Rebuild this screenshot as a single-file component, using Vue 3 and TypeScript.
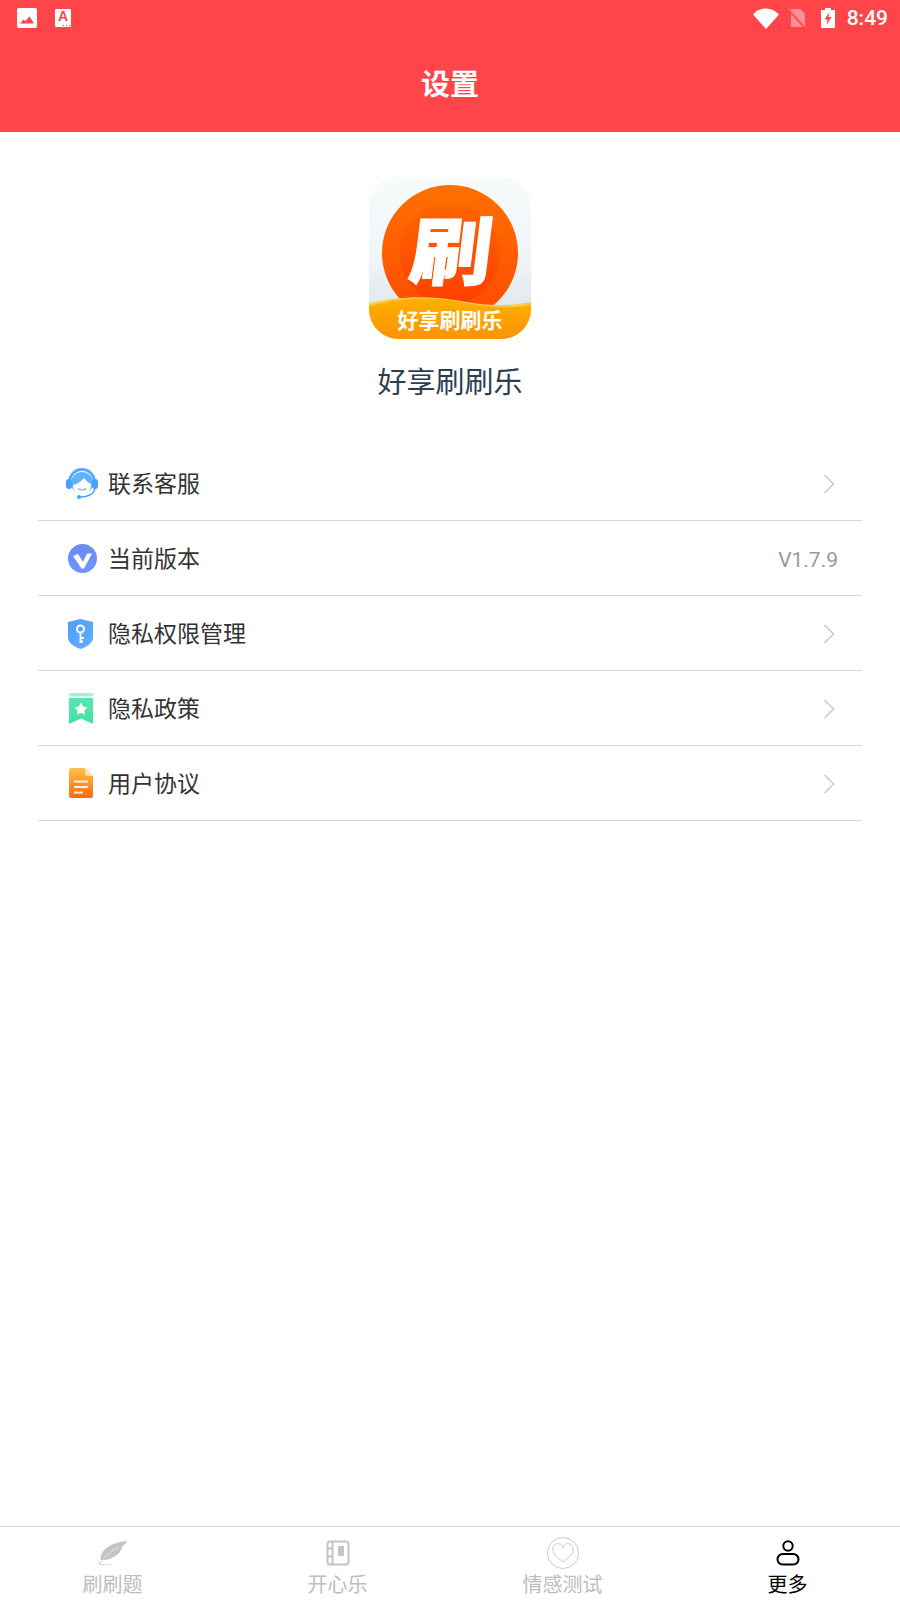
<script setup lang="ts">
// 设置页：头部、应用信息、菜单列表、底部标签栏
interface MenuRow {
  key: string;
  label: string;
  value?: string;
}

const rows: MenuRow[] = [
  { key: "service", label: "联系客服" },
  { key: "version", label: "当前版本", value: "V1.7.9" },
  { key: "permission", label: "隐私权限管理" },
  { key: "policy", label: "隐私政策" },
  { key: "agreement", label: "用户协议" },
];

const tabs = [
  { key: "quiz", label: "刷刷题" },
  { key: "fun", label: "开心乐" },
  { key: "test", label: "情感测试" },
  { key: "more", label: "更多", active: true },
];
</script>

<template>
  <div class="page">
    <header class="head">
      <div class="status">
        <svg class="st-img" width="20" height="20" viewBox="0 0 20 20">
          <rect width="20" height="20" rx="2" fill="#fff" />
          <path d="M3 15.500 6.500 11.500 8.500 13 12.500 8.500 17 15.500Z" fill="#ff454a" />
        </svg>
        <div class="st-app"><span>A</span></div>
        <div class="st-right">
          <svg class="st-wifi" width="26" height="21" viewBox="0 0 26 21"><path d="M0 6.500C3.500 2.500 8 0.500 13 0.500S22.500 2.500 26 6.500L13 21Z" fill="#fff" /></svg>
          <svg class="st-sim" width="18" height="20" viewBox="0 0 18 20">
            <path d="M3 1H12L17 6V19H3Z" fill="#fff" opacity=".4" />
            <path d="M0 1 17.500 20" stroke="#ff454a" stroke-width="2.500" />
            <path d="M0 0 18 19.500" stroke="#fff" stroke-width="1" opacity=".35" />
          </svg>
          <svg class="st-batt" width="14" height="20" viewBox="0 0 14 20">
            <path d="M0 2H4V0H10V2H14V20H0Z" fill="#fff" />
            <path d="M8.500 4 3.500 11.500H6.500L5.500 17 10.500 9H7.500Z" fill="#ff454a" />
          </svg>
          <span class="st-time">8:49</span>
        </div>
      </div>
      <h1 class="title">设置</h1>
    </header>

    <main class="main">
      <section class="about">
        <svg class="logo" width="162" height="162" viewBox="0 0 162 162">
          <defs>
            <linearGradient id="bg" x1="0" y1="0" x2="0" y2="1">
              <stop offset="0" stop-color="#f8fbfb" />
              <stop offset=".5" stop-color="#f0f5f8" />
              <stop offset="1" stop-color="#d4e0e9" />
            </linearGradient>
            <linearGradient id="sun" x1="0" y1="0" x2="0" y2="1">
              <stop offset="0" stop-color="#ff7000" />
              <stop offset="1" stop-color="#ff4a00" />
            </linearGradient>
            <linearGradient id="sunin" x1="0" y1="0" x2="0" y2="1">
              <stop offset="0" stop-color="#ff6400" />
              <stop offset="1" stop-color="#ff4000" />
            </linearGradient>
            <linearGradient id="wave" x1="0" y1="0" x2="0" y2="1">
              <stop offset="0" stop-color="#ffb000" />
              <stop offset="1" stop-color="#ff9200" />
            </linearGradient>
            <clipPath id="round"><rect width="162" height="162" rx="30" /></clipPath>
          </defs>
          <g clip-path="url(#round)">
            <rect width="162" height="162" fill="url(#bg)" />
            <circle cx="81" cy="76" r="68" fill="url(#sun)" />
            <circle cx="81" cy="77" r="50" fill="url(#sunin)" />
            <text class="logo-big" text-anchor="middle" transform="translate(79 102) skewX(-7) scale(1.08 .98)">刷</text>
            <path d="M0 126C25 121 45 119 70 121S120 133 162 125V162H0Z" fill="#ffc94a" />
            <path d="M0 129C25 123 45 120 70 122S125 135 162 128V162H0Z" fill="url(#wave)" />
            <text class="logo-small" x="81" y="151" text-anchor="middle">好享刷刷乐</text>
          </g>
        </svg>
        <div class="app-name">好享刷刷乐</div>
      </section>

      <ul class="menu">
        <li v-for="row in rows" :key="row.key" class="row">
          <svg class="row-icon" width="34" height="34" viewBox="0 0 34 34">
            <g v-if="row.key === 'service'" transform="translate(1 1)">
              <path d="M4.500 16C4.500 8 10 2.500 17 2.500S29.500 8 29.500 16" fill="none" stroke="#56abff" stroke-width="3" />
              <circle cx="17" cy="16" r="11" fill="#5fb2ff" />
              <path d="M8 18C12 17 17 14 19 11C21 14 24 16 26 17C26 24 22 28 17 28S8 24 8 18Z" fill="#fff" />
              <rect x="1" y="12" width="6" height="10" rx="3" fill="#45a3ff" />
              <rect x="27" y="12" width="6" height="10" rx="3" fill="#45a3ff" />
              <path d="M13 21.500C15 23.500 19 23.500 21 21.500" fill="none" stroke="#5fb2ff" stroke-width="1.200" />
              <path d="M30 21C29 27 23 30 15 30" fill="none" stroke="#45a3ff" stroke-width="1.500" />
              <circle cx="14" cy="30" r="2" fill="#45a3ff" />
            </g>
            <template v-else-if="row.key === 'version'">
              <defs>
                <linearGradient id="ver" x1="0" y1="0" x2="0" y2="1">
                  <stop offset="0" stop-color="#6b8cf0" />
                  <stop offset="1" stop-color="#6a95ff" />
                </linearGradient>
              </defs>
              <circle cx="18.500" cy="17.500" r="14.500" fill="url(#ver)" />
              <path d="M9 15 14 13 19 21 23 12.500H28L20 27.500H17.500Z" fill="#fff" />
            </template>
            <template v-else-if="row.key === 'permission'">
              <defs>
                <linearGradient id="shield" x1="0" y1="0" x2="1" y2="1">
                  <stop offset="0" stop-color="#4e9dfb" />
                  <stop offset="1" stop-color="#5fb1ff" />
                </linearGradient>
              </defs>
              <path d="M16.500 3 29 6V22C29 27 22 31 16.500 33C11 31 4 27 4 22V6Z" fill="url(#shield)" />
              <circle cx="16.500" cy="13" r="3.500" fill="none" stroke="#fff" stroke-width="2" />
              <path d="M16.500 16.500V27M16.500 22H20M16.500 25.500H19" fill="none" stroke="#fff" stroke-width="1.800" />
            </template>
            <template v-else-if="row.key === 'policy'">
              <defs>
                <linearGradient id="book" x1="0" y1="0" x2="0" y2="1">
                  <stop offset="0" stop-color="#5be5b1" />
                  <stop offset="1" stop-color="#3fe3a3" />
                </linearGradient>
              </defs>
              <rect x="5" y="2" width="24" height="3.500" fill="#a8f0d3" />
              <path d="M5 7H29V33L17 27.500 5 33Z" fill="url(#book)" />
              <path d="M17 11.500 19.200 15.500 23.500 16.200 20.500 19.400 21 23.800 17 21.800 13 23.800 13.500 19.400 10.500 16.200 14.800 15.500Z" fill="#fff" />
            </template>
            <template v-else>
              <defs>
                <linearGradient id="doc" x1="0" y1="0" x2="0" y2="1">
                  <stop offset="0" stop-color="#ffc04a" />
                  <stop offset="1" stop-color="#ff6a0c" />
                </linearGradient>
              </defs>
              <path d="M7 2H21L29 10V30A2 2 0 0 1 27 32H7A2 2 0 0 1 5 30V4A2 2 0 0 1 7 2Z" fill="url(#doc)" />
              <path d="M21 2 29 10H24A3 3 0 0 1 21 7Z" fill="#ffe1a6" />
              <path d="M10 15.500H24M10 21H24M10 26.500H19" stroke="#ffeedd" stroke-width="1.800" />
            </template>
          </svg>
          <span class="row-label">{{ row.label }}</span>
          <span v-if="row.value" class="row-value">{{ row.value }}</span>
          <svg v-else class="chevron" width="12" height="20" viewBox="0 0 12 20">
            <path d="M1.500 1 10.500 10 1.500 19" fill="none" stroke="#ccc" stroke-width="1.600" />
          </svg>
        </li>
      </ul>
    </main>

    <nav class="tabs">
      <div v-for="tab in tabs" :key="tab.key" class="tab" :class="{ active: tab.active }">
        <div class="tab-icon">
          <svg v-if="tab.key === 'quiz'" width="30" height="24" viewBox="0 0 30 24">
            <path d="M3 19C1 10 13 1 29 0C28 3 25 5 23 6.500C24.500 7 24 8 23 9C20 15 11 20 3 19Z" fill="#c4c4c4" />
            <path d="M5 18C10 13 15 9 21 6" fill="none" stroke="#e4e4e4" stroke-width=".8" />
            <path d="M1 23C2 22 3 21 4 20" fill="none" stroke="#c4c4c4" stroke-width="1" />
            <path d="M1 23.500H13" stroke="#ddd" stroke-width="1" />
          </svg>
          <svg v-else-if="tab.key === 'fun'" width="24" height="26" viewBox="0 0 24 26">
            <rect x="1.500" y="1.500" width="21" height="23" rx="2.500" fill="none" stroke="#c4c4c4" stroke-width="2" />
            <path d="M6.500 2V24M1 8.500H6.500M1 16.500H6.500" stroke="#c4c4c4" stroke-width="2" />
            <rect x="12" y="6" width="6" height="10" fill="#c4c4c4" />
          </svg>
          <svg v-else-if="tab.key === 'test'" width="34" height="34" viewBox="0 0 34 34">
            <circle cx="17" cy="17" r="15.500" fill="none" stroke="#ccc" stroke-width="1" />
            <path d="M17 26C12 22 7 18.500 7 14A5 5 0 0 1 17 11.500 5 5 0 0 1 27 14C27 18.500 22 22 17 26Z" fill="none" stroke="#ccc" stroke-width="1" />
          </svg>
          <svg v-else width="24" height="26" viewBox="0 0 24 26">
            <circle cx="12" cy="6" r="4.700" fill="none" stroke="#000" stroke-width="2" />
            <rect x="1.500" y="14" width="21" height="10.500" rx="5.250" fill="none" stroke="#000" stroke-width="2" />
          </svg>
        </div>
        <span class="tab-label">{{ tab.label }}</span>
      </div>
    </nav>
  </div>
</template>

<style>
html,
body {
  margin: 0;
  background: #fff;
}
</style>

<style scoped>
.page {
  width: 900px;
  height: 1600px;
  display: flex;
  flex-direction: column;
  background: #fff;
  font-family: "Noto Sans CJK SC", "Noto Sans", sans-serif;
}
.head {
  height: 132px;
  background: #ff454a;
  color: #fff;
  flex: none;
}
.status {
  height: 36px;
  display: flex;
  align-items: center;
  padding: 0 12px 0 17px;
}
.st-app {
  position: relative;
  width: 16px;
  height: 18px;
  margin-left: 18px;
  background: #fff;
  border-radius: 1px;
  color: #ff454a;
  font: 700 14px/15px "Liberation Sans", sans-serif;
  text-align: center;
}
/* три точки в углу значка */
.st-app::after {
  content: "";
  position: absolute;
  right: 1px;
  bottom: 1px;
  width: 7px;
  height: 1px;
  background: repeating-linear-gradient(90deg, #ff454a 0 1px, transparent 1px 3px);
}
.st-right {
  margin-left: auto;
  display: flex;
  align-items: center;
}
.st-sim {
  margin-left: 9px;
}
.st-batt {
  margin-left: 15px;
}
.st-time {
  font: 500 21px/1 Roboto, sans-serif;
  margin-left: 12px;
}
.title {
  margin: 0;
  padding-top: 26px;
  font-size: 29px;
  line-height: 40px;
  font-weight: 700;
  text-align: center;
}
.main {
  flex: 1;
}
.about {
  display: flex;
  flex-direction: column;
  align-items: center;
  padding-top: 45px;
}
.logo {
  display: block;
}
.logo-big {
  font-size: 76px;
  font-weight: 900;
  fill: #fff;
  stroke: #fff;
  stroke-width: 1px;
}
.logo-small {
  font-size: 21px;
  font-weight: 700;
  fill: #fff;
}
.app-name {
  margin-top: 19px;
  margin-bottom: 1px;
  font-size: 29px;
  line-height: 44px;
  color: #2c3e50;
}
.menu {
  list-style: none;
  margin: 43px 38px 0;
  padding: 0;
}
.row {
  height: 74px;
  border-bottom: 1px solid #d8d8d8;
  display: flex;
  align-items: center;
  padding: 0 27px 0 26px;
}
.row-icon {
  flex: none;
}
.row-label {
  margin-left: 10px;
  margin-bottom: 2px;
  font-size: 23px;
  color: #333;
}
.row-value {
  margin-left: auto;
  margin-right: -3px;
  margin-top: 3px;
  font: 400 21px Roboto, sans-serif;
  color: #999;
}
.chevron {
  margin-left: auto;
  margin-top: 2px;
}
.tabs {
  height: 73px;
  flex: none;
  border-top: 1px solid #dcdcdc;
  display: grid;
  grid-template-columns: repeat(4, 1fr);
}
.tab {
  display: flex;
  flex-direction: column;
  align-items: center;
  color: #bdbdbd;
}
.tab-icon {
  height: 52px;
  display: flex;
  align-items: center;
  justify-content: center;
}
.tab-label {
  font-size: 20px;
  line-height: 24px;
  margin-top: -7px;
}
.tab.active {
  color: #000;
}
</style>
